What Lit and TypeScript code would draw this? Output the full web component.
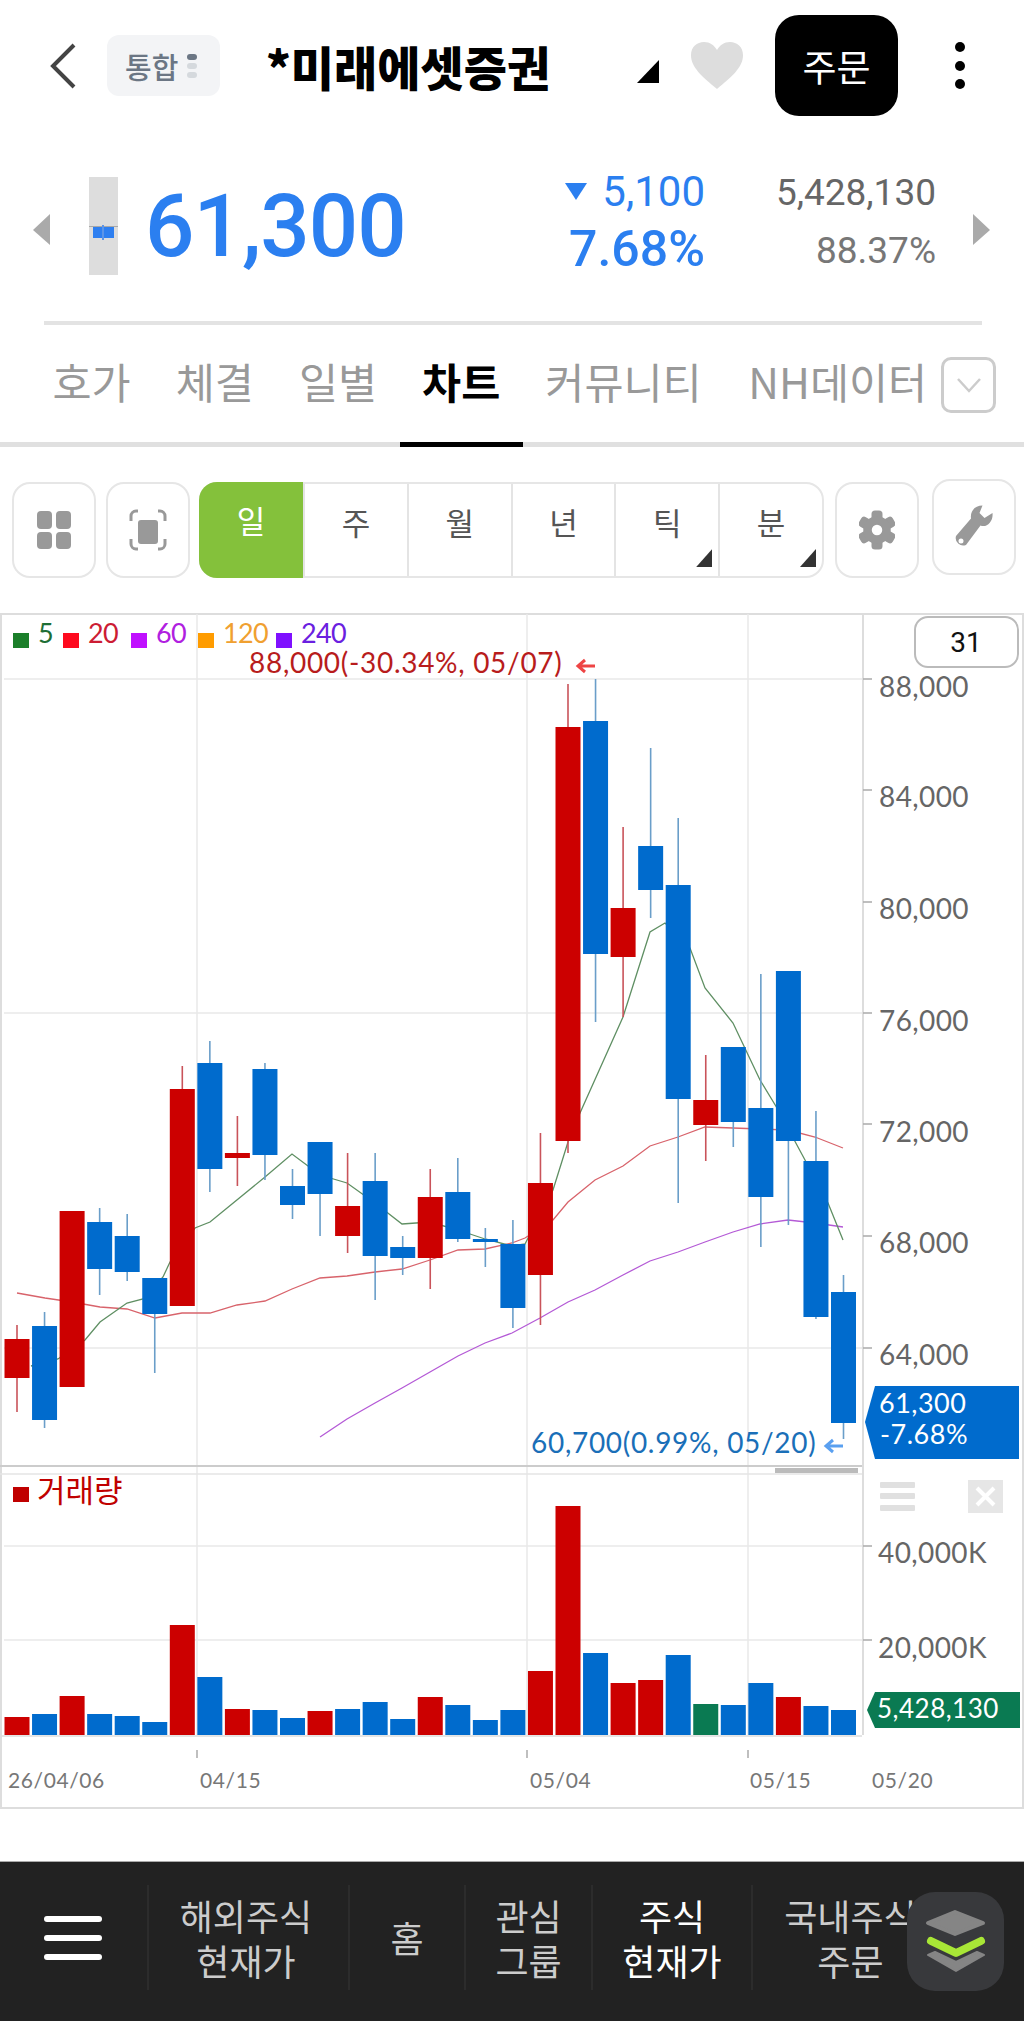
import { LitElement, html, css, svg } from 'lit';
import { customElement } from 'lit/decorators.js';

const RED = '#cc0000';
const BLUE = '#006bcd';
const GREEN = '#0a7a52';

// color, wick top, body top, body bottom, wick bottom (page pixels)
const CANDLES: [string, number, number, number, number][] = [
  [RED, 1325, 1339, 1378, 1412],
  [BLUE, 1312, 1326, 1420, 1428],
  [RED, 1211, 1211, 1387, 1387],
  [BLUE, 1208, 1222, 1269, 1295],
  [BLUE, 1214, 1236, 1272, 1281],
  [BLUE, 1278, 1278, 1314, 1373],
  [RED, 1066, 1089, 1306, 1306],
  [BLUE, 1041, 1063, 1169, 1192],
  [RED, 1116, 1153, 1158, 1186],
  [BLUE, 1063, 1069, 1155, 1180],
  [BLUE, 1169, 1186, 1205, 1219],
  [BLUE, 1142, 1142, 1194, 1236],
  [RED, 1153, 1206, 1236, 1253],
  [BLUE, 1153, 1181, 1256, 1300],
  [BLUE, 1236, 1247, 1258, 1275],
  [RED, 1169, 1197, 1258, 1289],
  [BLUE, 1158, 1192, 1239, 1242],
  [BLUE, 1228, 1239, 1242, 1267],
  [BLUE, 1220, 1244, 1308, 1328],
  [RED, 1133, 1183, 1275, 1325],
  [RED, 684, 727, 1141, 1153],
  [BLUE, 679, 721, 954, 1022],
  [RED, 827, 908, 957, 1017],
  [BLUE, 748, 846, 890, 918],
  [BLUE, 818, 885, 1099, 1203],
  [RED, 1055, 1100, 1125, 1161],
  [BLUE, 1047, 1047, 1122, 1147],
  [BLUE, 974, 1108, 1197, 1247],
  [BLUE, 971, 971, 1141, 1225],
  [BLUE, 1111, 1161, 1317, 1319],
  [BLUE, 1275, 1292, 1423, 1439],
];

const VOLUMES: [string, number][] = [
  [RED, 1717], [BLUE, 1714], [RED, 1696], [BLUE, 1714], [BLUE, 1716], [BLUE, 1722],
  [RED, 1625], [BLUE, 1677], [RED, 1709], [BLUE, 1710], [BLUE, 1718], [RED, 1711],
  [BLUE, 1709], [BLUE, 1702], [BLUE, 1719], [RED, 1697], [BLUE, 1705], [BLUE, 1720],
  [BLUE, 1710], [RED, 1671], [RED, 1506], [BLUE, 1653], [RED, 1683], [RED, 1680],
  [BLUE, 1655], [GREEN, 1704], [BLUE, 1705], [BLUE, 1683], [RED, 1697], [BLUE, 1706],
  [BLUE, 1710],
];

const MA5 =
  '31,1366 58,1359 85,1340 100,1322 127,1303 143,1299 163,1277 170,1262 195,1228 210,1222 265,1177 292,1154 320,1175 347,1183 375,1203 402,1224 430,1222 458,1230 485,1239 512,1246 525,1244 553,1190 568,1142 580,1113 623,1017 650,932 665,923 690,948 705,988 733,1023 760,1080 777,1108 805,1160 828,1203 843,1240';
const MA20 =
  '17,1293 45,1298 72,1302 100,1307 127,1309 155,1318 182,1313 210,1313 237,1305 265,1301 292,1289 320,1278 347,1276 375,1272 402,1269 430,1260 458,1250 485,1249 512,1243 525,1238 553,1220 568,1202 595,1180 623,1166 650,1146 678,1137 705,1127 733,1128 760,1129 788,1130 815,1137 843,1148';
const MA60 =
  '320,1437 347,1419 375,1403 402,1388 430,1372 458,1356 485,1343 512,1333 540,1318 568,1302 595,1290 623,1275 650,1261 678,1252 705,1242 733,1232 760,1224 788,1220 815,1223 843,1227';

const LEGEND = [
  { sq: '#1b7f2a', fg: '#1e6e35', x: 13, label: '5' },
  { sq: '#fe0a1e', fg: '#cc1c33', x: 63, label: '20' },
  { sq: '#c010ff', fg: '#b020e0', x: 131, label: '60' },
  { sq: '#ff9c00', fg: '#f0a030', x: 198, label: '120' },
  { sq: '#7f10ff', fg: '#6a20e0', x: 276, label: '240' },
];

const AXIS = [
  { y: 679, label: '88,000', base: 697 },
  { y: 790, label: '84,000', base: 807 },
  { y: 902, label: '80,000', base: 919 },
  { y: 1013, label: '76,000', base: 1031 },
  { y: 1124, label: '72,000', base: 1142 },
  { y: 1236, label: '68,000', base: 1253 },
  { y: 1348, label: '64,000', base: 1365 },
];

const slotX = (i: number) => 17 + 27.55 * i;

@customElement('stock-chart')
export class StockChart extends LitElement {
  static styles = css`
    :host {
      display: block;
    }
    svg {
      display: block;
    }
    text {
      font-family: Lato, 'Noto Sans', sans-serif;
    }
    .axis {
      font-size: 28px;
      letter-spacing: 0.4px;
      fill: #666;
    }
    .legend {
      font-size: 27px;
      letter-spacing: -0.6px;
    }
    .note {
      font-size: 28px;
      letter-spacing: 0.7px;
    }
    .date {
      font-size: 21px;
      letter-spacing: 0.6px;
      fill: #777;
    }
    .tag {
      font-size: 27px;
      letter-spacing: 0.5px;
      fill: #fff;
    }
    .tag.small {
      font-size: 26px;
    }
    .vol-title {
      font-family: 'Noto Sans CJK KR', sans-serif;
      font-size: 31px;
      fill: #c00000;
    }
    .period {
      font-family: Roboto, sans-serif;
      font-size: 28px;
      fill: #111;
    }
  `;

  private arrow(x: number, y: number, color: string) {
    return svg`<path d="M${x + 18} ${y}H${x + 1}M${x + 8} ${y - 6}L${x + 1} ${y}L${x + 8} ${y + 6}"
      fill="none" stroke=${color} stroke-width="3" />`;
  }

  render() {
    return html`
      <svg width="1024" height="1196" viewBox="0 613 1024 1196">
        <rect x="1" y="614" width="1022" height="1194" fill="#fff" stroke="#ddd" stroke-width="2" />

        ${[197, 527, 748].map(
          (x) => svg`
            <line x1=${x} x2=${x} y1="614" y2="1735" stroke="#e8e8e8" stroke-width="1.5" />
            <line x1=${x} x2=${x} y1="1750" y2="1758" stroke="#aaa" stroke-width="1.5" />`
        )}
        ${[679, 1013, 1348, 1546, 1640].map(
          (y) => svg`<line x1="4" x2="862" y1=${y} y2=${y} stroke="#e8e8e8" stroke-width="1.5" />`
        )}
        <line x1="863" x2="863" y1="614" y2="1735" stroke="#ddd" stroke-width="2" />
        <line x1="0" x2="862" y1="1466" y2="1466" stroke="#ccc" stroke-width="2" />
        <line x1="0" x2="862" y1="1474" y2="1474" stroke="#e4e4e4" stroke-width="1.5" />
        <rect x="775" y="1468" width="83" height="5" fill="#bbb" />

        ${LEGEND.map(
          (l) => svg`
            <rect x=${l.x} y="633" width="16" height="15" fill=${l.sq} />
            <text class="legend" x=${l.x + 25} y="643" fill=${l.fg}>${l.label}</text>`
        )}
        <text class="note" x="249" y="673" fill="#b81c1c">88,000(-30.34%, 05/07)</text>
        ${this.arrow(577, 666, '#ee4444')}
        <text class="note" x="531" y="1453" fill="#1a6fb8">60,700(0.99%, 05/20)</text>
        ${this.arrow(825, 1446, '#5aa0f0')}

        <rect x="915" y="617" width="103" height="50" rx="13" fill="#fff" stroke="#bbb" stroke-width="2" />
        <text class="period" x="966" y="652" text-anchor="middle">31</text>

        ${AXIS.map(
          (a) => svg`
            <line x1="863" x2="872" y1=${a.y} y2=${a.y} stroke="#aaa" stroke-width="1.5" />
            <text class="axis" x="879" y=${a.base}>${a.label}</text>`
        )}

        <polyline points=${MA60} fill="none" stroke="#b45ad6" stroke-width="1.3" />
        <polyline points=${MA20} fill="none" stroke="#d8636b" stroke-width="1.3" />
        <polyline points=${MA5} fill="none" stroke="#5f8f63" stroke-width="1.3" />

        ${CANDLES.map(([color, wickTop, top, bottom, wickBottom], i) => {
          const x = slotX(i);
          const wick = color === RED ? '#c9535a' : '#6a9ec9';
          return svg`
            <line x1=${x} x2=${x} y1=${wickTop} y2=${wickBottom} stroke=${wick} stroke-width="1.6" />
            <rect x=${x - 12.5} y=${top} width="25" height=${bottom - top} fill=${color} />`;
        })}

        <path d="M875 1386H1019V1459H875L865 1422Z" fill=${BLUE} />
        <text class="tag" x="879" y="1413">61,300</text>
        <text class="tag" x="880" y="1444">-7.68%</text>

        <rect x="13" y="1487" width="16" height="15" fill="#c00000" />
        <text class="vol-title" x="37" y="1502">거래량</text>
        ${[1482, 1493, 1505].map(
          (y) => svg`<rect x="880" y=${y} width="35" height="6" rx="1" fill="#e0e0e0" />`
        )}
        <rect x="968" y="1480" width="35" height="33" fill="#e6e6e6" />
        <path d="M977 1488L994 1505M994 1488L977 1505" stroke="#fff" stroke-width="4" />

        <text class="axis" x="878" y="1563">40,000K</text>
        <text class="axis" x="878" y="1658">20,000K</text>
        <line x1="863" x2="872" y1="1546" y2="1546" stroke="#aaa" stroke-width="1.5" />
        <line x1="863" x2="872" y1="1640" y2="1640" stroke="#aaa" stroke-width="1.5" />

        ${VOLUMES.map(([color, top], i) => {
          const x = slotX(i);
          return svg`<rect x=${x - 12.5} y=${top} width="25" height=${1735 - top} fill=${color} />`;
        })}
        <line x1="0" x2="862" y1="1736" y2="1736" stroke="#ddd" stroke-width="1.5" />

        <path d="M875 1692H1020V1728H875L867 1710Z" fill=${GREEN} />
        <text class="tag small" x="877" y="1718">5,428,130</text>

        <text class="date" x="8" y="1788">26/04/06</text>
        <text class="date" x="200" y="1788">04/15</text>
        <text class="date" x="530" y="1788">05/04</text>
        <text class="date" x="750" y="1788">05/15</text>
        <text class="date" x="872" y="1788">05/20</text>
      </svg>
    `;
  }
}

@customElement('app-root')
export class AppRoot extends LitElement {
  static styles = css`
    :host {
      display: block;
      width: 1024px;
      height: 2021px;
      position: relative;
      overflow: hidden;
      background: #fff;
      font-family: 'Noto Sans CJK KR', 'Noto Sans', sans-serif;
    }

    /* header */
    .header {
      display: flex;
      align-items: center;
      height: 131px;
    }
    .back {
      margin-left: 49px;
    }
    .chip {
      display: flex;
      align-items: center;
      gap: 9px;
      box-sizing: border-box;
      width: 113px;
      height: 61px;
      margin-left: 30px;
      padding-left: 18px;
      border-radius: 12px;
      background: #f3f4f6;
      color: #6b7684;
      font-size: 29px;
      font-weight: 500;
    }
    .chip-dots {
      display: flex;
      flex-direction: column;
      gap: 3px;
    }
    .chip-dots i {
      display: block;
      width: 10px;
      height: 6px;
      border-radius: 3px;
      background: #d5d9dd;
    }
    .chip-dots i:first-child {
      background: #6b7684;
    }
    .title {
      width: 371px;
      margin-left: 46px;
      font-size: 47px;
      font-weight: 900;
      color: #000;
      white-space: nowrap;
    }
    .title-tri {
      margin-top: 12px;
    }
    .heart {
      margin-left: 32px;
    }
    .order {
      display: flex;
      align-items: center;
      justify-content: center;
      width: 123px;
      height: 101px;
      margin-left: 32px;
      border-radius: 24px;
      background: #000;
      color: #fff;
      font-size: 37px;
    }
    .kebab {
      display: flex;
      flex-direction: column;
      gap: 8.5px;
      margin-left: 57px;
    }
    .kebab i {
      display: block;
      width: 10px;
      height: 10px;
      border-radius: 50%;
      background: #000;
    }

    /* quote */
    .quote {
      display: flex;
      align-items: center;
      height: 190px;
      font-family: Roboto, sans-serif;
    }
    .quote-tri {
      margin-top: 6px;
    }
    .quote-tri.left {
      margin-left: 33px;
    }
    .quote-tri.right {
      margin-left: 37px;
    }
    .tick-bar {
      position: relative;
      width: 29px;
      height: 98px;
      margin-left: 39px;
      background: #ddd;
    }
    .tick-bar::before {
      content: '';
      position: absolute;
      left: 0;
      top: 49px;
      width: 29px;
      height: 1px;
      background: #a8a8a8;
    }
    .tick-bar i {
      position: absolute;
      left: 4px;
      top: 50px;
      width: 21px;
      height: 11px;
      background: #2e7ff0;
    }
    .tick-bar i::after {
      content: '';
      position: absolute;
      left: 9px;
      top: -2px;
      width: 2px;
      height: 15px;
      background: #5c95e8;
    }
    .price {
      width: 408px;
      margin-left: 27px;
      color: #2b7ff0;
      font-size: 87px;
      font-weight: 500;
      letter-spacing: -1px;
      line-height: 100px;
    }
    .change {
      display: flex;
      flex-direction: column;
      align-items: flex-end;
      width: 156px;
      margin: 0 0 10px -4px;
      color: #2b7ff0;
    }
    .change-top {
      display: flex;
      align-items: center;
      gap: 15px;
      height: 55px;
      font-size: 42px;
    }
    .change-pct {
      height: 60px;
      font-size: 50px;
      font-weight: 500;
      line-height: 60px;
    }
    .volume {
      display: flex;
      flex-direction: column;
      align-items: flex-end;
      width: 231px;
      margin-bottom: 8px;
      font-size: 37px;
      color: #666;
    }
    .volume span {
      height: 58px;
      line-height: 58px;
    }
    .volume span + span {
      color: #777;
    }
    .rule {
      height: 4px;
      margin: 0 42px 0 44px;
      background: #e3e3e3;
    }

    /* tabs */
    .tabs {
      display: flex;
      align-items: stretch;
      height: 117px;
      padding-left: 30px;
      border-bottom: 5px solid #e0e0e0;
    }
    .tab {
      display: flex;
      align-items: center;
      padding: 0 22.5px 7px;
      margin-bottom: -5px;
      border-bottom: 5px solid transparent;
      color: #999;
      font-size: 42.5px;
      white-space: nowrap;
    }
    .tab.active {
      color: #000;
      font-weight: 700;
      border-bottom-color: #000;
    }
    .tab.last {
      padding: 0 0 7px 24px;
    }
    .tab-more {
      display: flex;
      align-items: center;
      justify-content: center;
      box-sizing: border-box;
      width: 55px;
      height: 56px;
      margin: 32px 0 0 14px;
      border: 3px solid #ccc;
      border-radius: 10px;
    }

    /* toolbar */
    .toolbar {
      display: flex;
      align-items: flex-start;
      margin: 35px 0 35px 12px;
    }
    .tool {
      display: flex;
      align-items: center;
      justify-content: center;
      box-sizing: border-box;
      width: 84px;
      height: 96px;
      border: 2px solid #e6e6e6;
      border-radius: 18px;
    }
    .tool + .tool {
      margin-left: 10px;
    }
    .tool.raised {
      margin: -3px 0 0 13px;
    }
    .periods {
      display: flex;
      box-sizing: border-box;
      width: 625px;
      height: 96px;
      margin: 0 11px 0 9px;
      border: 2px solid #e6e6e6;
      border-radius: 18px;
    }
    .period {
      position: relative;
      flex: 1;
      padding-top: 15px;
      border-left: 2px solid #e4e4e4;
      color: #555;
      font-size: 31px;
      line-height: 46px;
      text-align: center;
    }
    .period.on {
      flex: 0 0 104px;
      margin: -2px 0 -2px -2px;
      padding-top: 15px;
      border-left: 0;
      border-radius: 18px 0 0 18px;
      background: #84c13b;
      color: #fff;
    }
    .period.more::after {
      content: '';
      position: absolute;
      right: 6px;
      bottom: 9px;
      width: 16px;
      height: 18px;
      background: #333;
      clip-path: polygon(100% 0, 100% 100%, 0 100%);
    }

    /* bottom nav */
    .nav {
      position: relative;
      display: flex;
      align-items: center;
      box-sizing: border-box;
      height: 160px;
      margin-top: 52px;
      border-top: 1px solid #aaa;
      background: #222;
      overflow: hidden;
    }
    .menu {
      display: flex;
      flex-direction: column;
      gap: 13px;
      flex: 0 0 auto;
      width: 147px;
      box-sizing: border-box;
      padding-left: 44px;
      padding-bottom: 8px;
    }
    .menu i {
      display: block;
      width: 58px;
      height: 6px;
      border-radius: 3px;
      background: #fff;
    }
    .nav-item {
      display: flex;
      align-items: center;
      justify-content: center;
      box-sizing: border-box;
      flex: 0 0 auto;
      height: 105px;
      margin-bottom: 8px;
      border-left: 2px solid #2c2c2c;
      color: #ccc;
      font-size: 36px;
      line-height: 45px;
      text-align: center;
      white-space: nowrap;
    }
    .nav-item.on {
      color: #fff;
    }
    .nav-item.shift {
      padding-right: 5px;
    }
    .layers {
      position: absolute;
      left: 907px;
      top: 30px;
      width: 97px;
      height: 99px;
      border-radius: 28px;
      background: #38393c;
    }
  `;

  private grid() {
    return html`<svg width="34" height="38" viewBox="0 0 34 38">
      <rect x="0" y="0" width="15" height="18" rx="4" fill="#999" />
      <rect x="19" y="0" width="15" height="18" rx="4" fill="#999" />
      <rect x="0" y="21" width="15" height="17" rx="4" fill="#999" />
      <rect x="19" y="21" width="15" height="17" rx="4" fill="#999" />
    </svg>`;
  }

  private capture() {
    return html`<svg width="38" height="44" viewBox="0 0 38 44" fill="none">
      <rect x="9" y="12" width="20" height="24" rx="3" fill="#999" />
      <path
        d="M2 13V8a5 5 0 0 1 5-5h2M29 3h2a5 5 0 0 1 5 5v5M36 31v5a5 5 0 0 1-5 5h-2M9 41H7a5 5 0 0 1-5-5v-5"
        stroke="#999"
        stroke-width="3"
      />
    </svg>`;
  }

  private gear() {
    return html`<svg width="36" height="40" viewBox="-18 -20 36 40">
      ${[0, 60, 120, 180, 240, 300].map(
        (a) => svg`<rect x="-5.5" y="-19.5" width="11" height="12" rx="3.5" fill="#999" transform="rotate(${a})" />`
      )}
      <circle r="9.5" fill="none" stroke="#999" stroke-width="8.5" />
    </svg>`;
  }

  private wrench() {
    return html`<svg width="40" height="44" viewBox="0 0 40 44">
      <path
        fill="#999"
        fill-rule="evenodd"
        d="M28.5 .5L25.5 8L30.5 13L38.5 8C39.5 16 33 23 26.5 20.5L12 40A7.5 7.5 0 0 1 2 31L17 13.5C16 6 21 .5 28.5 .5ZM4.5 36a2.5 2.5 0 1 0 5 0a2.5 2.5 0 1 0 -5 0Z"
      />
    </svg>`;
  }

  render() {
    const tabs = ['호가', '체결', '일별', '차트', '커뮤니티'];
    const periods = ['일', '주', '월', '년', '틱', '분'];
    const nav = [
      { w: 201, on: false, shift: true, lines: ['해외주식', '현재가'] },
      { w: 116, on: false, shift: false, lines: ['홈'] },
      { w: 127, on: false, shift: false, lines: ['관심', '그룹'] },
      { w: 160, on: true, shift: false, lines: ['주식', '현재가'] },
      { w: 202, on: false, shift: true, lines: ['국내주식', '주문'] },
    ];

    return html`
      <div class="header">
        <svg class="back" width="28" height="46" viewBox="0 0 28 46" fill="none">
          <path d="M25 2L4 23L25 44" stroke="#444" stroke-width="4" />
        </svg>
        <div class="chip">
          <span>통합</span>
          <div class="chip-dots"><i></i><i></i><i></i></div>
        </div>
        <div class="title">*미래에셋증권</div>
        <svg class="title-tri" width="22" height="23" viewBox="0 0 22 23">
          <path d="M22 0V23H0Z" fill="#000" />
        </svg>
        <svg class="heart" width="52" height="47" viewBox="0 0 52 47">
          <path
            d="M26 47C12 35 0 26 0 13C0 5 6 0 13 0C19 0 23 3 26 8C29 3 33 0 39 0C46 0 52 5 52 13C52 26 40 35 26 47Z"
            fill="#ddd"
          />
        </svg>
        <div class="order">주문</div>
        <div class="kebab"><i></i><i></i><i></i></div>
      </div>

      <div class="quote">
        <svg class="quote-tri left" width="17" height="31" viewBox="0 0 17 31">
          <path d="M17 0V31L0 16Z" fill="#aaa" />
        </svg>
        <div class="tick-bar"><i></i></div>
        <div class="price">61,300</div>
        <div class="change">
          <div class="change-top">
            <svg width="22" height="17" viewBox="0 0 22 17"><path d="M0 0H22L11 17Z" fill="#2b7ff0" /></svg>
            <span>5,100</span>
          </div>
          <div class="change-pct">7.68%</div>
        </div>
        <div class="volume">
          <span>5,428,130</span>
          <span>88.37%</span>
        </div>
        <svg class="quote-tri right" width="17" height="31" viewBox="0 0 17 31">
          <path d="M0 0V31L17 16Z" fill="#aaa" />
        </svg>
      </div>
      <div class="rule"></div>

      <div class="tabs">
        ${tabs.map((t) => html`<div class="tab ${t === '차트' ? 'active' : ''}">${t}</div>`)}
        <div class="tab last">NH데이터</div>
        <div class="tab-more">
          <svg width="26" height="16" viewBox="0 0 26 16" fill="none">
            <path d="M2 2L13 14L24 2" stroke="#ccc" stroke-width="2.5" />
          </svg>
        </div>
      </div>

      <div class="toolbar">
        <div class="tool">${this.grid()}</div>
        <div class="tool">${this.capture()}</div>
        <div class="periods">
          ${periods.map(
            (p, i) =>
              html`<div class="period ${i === 0 ? 'on' : ''} ${i > 3 ? 'more' : ''}">${p}</div>`
          )}
        </div>
        <div class="tool">${this.gear()}</div>
        <div class="tool raised">${this.wrench()}</div>
      </div>

      <stock-chart></stock-chart>

      <div class="nav">
        <div class="menu"><i></i><i></i><i></i></div>
        ${nav.map(
          (n) => html`<div class="nav-item ${n.on ? 'on' : ''} ${n.shift ? 'shift' : ''}" style="width:${n.w}px">
            <div>${n.lines.map((l, i) => html`${i ? html`<br />` : ''}${l}`)}</div>
          </div>`
        )}
        <div class="layers">
          <svg width="97" height="99" viewBox="907 1892 97 99">
            <path d="M955 1912L983 1923L955 1934L928 1923Z" fill="#858585" stroke="#858585" stroke-width="4" stroke-linejoin="round" />
            <path d="M928 1955L935 1952L956 1962L977 1952L984 1955L956 1971Z" fill="#858585" stroke="#858585" stroke-width="2" stroke-linejoin="round" />
            <path d="M931 1941L956 1953L981 1941" fill="none" stroke="#a8e636" stroke-width="8" stroke-linecap="round" stroke-linejoin="round" />
          </svg>
        </div>
      </div>
    `;
  }
}
